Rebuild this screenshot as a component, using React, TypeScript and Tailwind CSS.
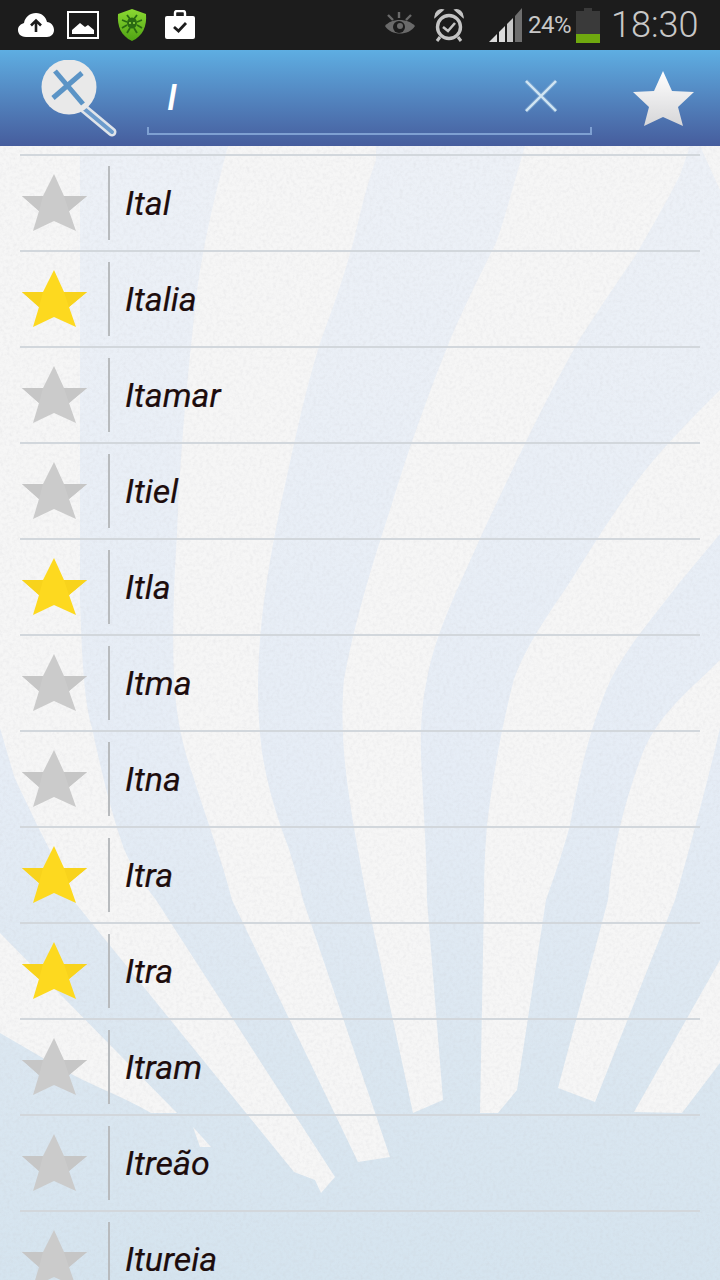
import React from "react";

const names: [string, boolean][] = [
  ["Ital", false],
  ["Italia", true],
  ["Itamar", false],
  ["Itiel", false],
  ["Itla", true],
  ["Itma", false],
  ["Itna", false],
  ["Itra", true],
  ["Itra", true],
  ["Itram", false],
  ["Itreão", false],
  ["Itureia", false],
];

const W = [
  "M0 146 L80 146 L80 600 C82 660 84 700 92 728 C102 775 112 815 124 849 C134 872 145 885 156 900 L335 1177 L321 1193 L315 1180 L294 1172 L73 900 C60 870 50 850 37 825 C28 805 20 790 14 776 L0 728 Z",
  "M0 933 L177 1113 L151 1113 C120 1095 90 1085 60 1068 L0 1033 Z",
  "M193 1127 L211 1147 L200 1147 Z",
  "M228 146 L376 146 L376 160 C365 190 360 215 353 243 C343 280 332 310 321 340 C305 390 295 440 285 485 C272 545 262 600 259 655 C257 690 258 720 262 752 C268 790 278 820 289 849 C295 870 300 885 303 900 L390 1157 L358 1162 L232 900 C222 860 205 815 193 776 C182 745 176 715 174 679 C172 630 174 580 177 534 C180 450 188 370 197 291 C203 245 215 195 228 146 Z",
  "M525 146 L690 146 L680 175 C665 205 650 230 634 258 C615 285 597 312 579 340 C545 400 512 470 482 534 C460 585 436 630 427 679 C420 710 420 745 422 776 C424 820 427 860 427 900 L443 1100 L413 1113 L367 900 C358 850 348 800 344 752 C342 725 342 700 344 679 C355 620 372 565 390 510 C408 450 428 395 450 340 C465 305 480 275 496 243 C505 218 512 190 525 146 Z",
  "M720 390 L720 534 L680 582 C655 615 628 645 611 679 C590 725 578 780 570 825 C562 855 553 880 546 900 L517 1090 L498 1113 L480 1113 L484 900 C484 870 485 850 487 825 C493 775 502 725 514 679 C526 645 550 612 570 582 C590 550 612 515 634 485 C660 450 690 420 720 390 Z",
  "M720 660 L720 728 C708 780 692 840 675 900 L595 1102 L558 1088 L608 900 C612 850 625 800 643 752 C660 712 690 690 720 660 Z",
  "M720 960 L720 1063 L682 1113 L634 1112 Z",
  "M700 146 L720 146 L720 190 Z",
];

function Backdrop() {
  return (
    <svg className="absolute left-0 top-0" width="720" height="1280" viewBox="0 0 720 1280">
      <defs>
        <linearGradient id="base" x1="0" y1="146" x2="0" y2="1280" gradientUnits="userSpaceOnUse">
          <stop offset="0" stopColor="#edf1f7" />
          <stop offset="0.55" stopColor="#e6edf6" />
          <stop offset="0.8" stopColor="#dbe7f1" />
          <stop offset="1" stopColor="#d5e4ef" />
        </linearGradient>
        <filter id="paper" x="0" y="0" width="100%" height="100%">
          <feTurbulence type="fractalNoise" baseFrequency="0.3" numOctaves="3" seed="4" />
          <feColorMatrix values="0 0 0 0 0.55  0 0 0 0 0.55  0 0 0 0 0.58  0.6 0.6 0 0 -0.5" />
        </filter>
      </defs>
      <rect width="720" height="1280" fill="url(#base)" />
      {W.map((d) => (
        <path key={d} d={d} fill="#f6f6f6" />
      ))}
      <rect width="720" height="1280" filter="url(#paper)" opacity="0.4" />
    </svg>
  );
}

function Star({ on }: { on: boolean }) {
  const main = on ? "#fdd91f" : "#cbcbcb";
  const shade = on ? "#f8d31c" : "#c6c6c6";
  return (
    <svg width="66" height="60" viewBox="0 0 66 60" className="mt-[8px] ml-[2px] block">
      <polygon points="32,0 42,22 65,22 47,37 54,57 32,47 11,57 17,37 0,22 21,22" fill={main} />
      <polygon points="65,22 47,37 42,22" fill={shade} />
      <polygon points="0,22 17,37 21,22" fill={shade} />
    </svg>
  );
}

function Row({ name, on }: { name: string; on: boolean }) {
  return (
    <div className="h-[96px] shrink-0 border-t-2 border-[#d2d7dc] pt-[10px] flex items-start">
      <div className="w-[88px] h-[74px] shrink-0">
        <Star on={on} />
      </div>
      <div className="w-[2px] h-[74px] bg-[#b8bbbe] shrink-0" />
      <div className="h-[74px] flex items-center pl-[15px] text-[34px] italic text-[#1d0c0c] font-['Roboto',sans-serif] leading-none [-webkit-text-stroke:0.2px_#1d0c0c]">
        {name}
      </div>
    </div>
  );
}

function StatusLeft() {
  return (
    <div className="flex items-center">
      <svg width="38" height="26" viewBox="0 0 38 26" className="ml-[17px]">
        <path d="M9 25 C3 25 1 21 1 18 C1 14 4 12 7 11 C8 5 13 1 19 1 C25 1 29 5 30 10 C34 10 37 14 37 18 C37 22 34 25 30 25 Z" fill="#fff" />
        <path d="M19 20 V9 M14 13.5 L19 8.5 L24 13.5" fill="none" stroke="#1c1c1c" strokeWidth="2.6" />
      </svg>
      <svg width="32" height="28" viewBox="0 0 32 28" className="ml-[12px]">
        <rect x="1" y="1" width="30" height="26" fill="none" stroke="#fff" strokeWidth="2" />
        <path d="M5 23 V19 L13 12 L18 16 L21 14 L27 19 V23 Z" fill="#fff" />
      </svg>
      <svg width="32" height="34" viewBox="0 0 32 34" className="ml-[17px]">
        <defs>
          <linearGradient id="dw" x1="0" y1="0" x2="0" y2="1">
            <stop offset="0" stopColor="#8bd832" />
            <stop offset="1" stopColor="#4fa313" />
          </linearGradient>
        </defs>
        <path d="M16 1 L30 6 C31 18 27 28 16 33 C5 28 1 18 2 6 Z" fill="url(#dw)" />
        <ellipse cx="16" cy="15" rx="5" ry="5.5" fill="#2a6a12" />
        <path d="M11 7 L14 11 M21 7 L18 11 M6 12 L11 14 M26 12 L21 14 M6 20 L11 17 M26 20 L21 17 M11 25 L14 20 M21 25 L18 20" stroke="#2a6a12" strokeWidth="1.8" fill="none" />
        <circle cx="14" cy="15" r="1" fill="#9ae044" />
        <circle cx="18" cy="15" r="1" fill="#9ae044" />
      </svg>
      <svg width="30" height="30" viewBox="0 0 30 30" className="ml-[17px]">
        <path d="M10 6 V3 C10 1.5 11 1 12 1 H18 C19 1 20 1.5 20 3 V6" fill="none" stroke="#fff" strokeWidth="2.4" />
        <rect x="0" y="6" width="30" height="23" rx="2" fill="#fff" />
        <path d="M9 17 L13.5 21 L21 13" fill="none" stroke="#1c1c1c" strokeWidth="2.8" />
      </svg>
    </div>
  );
}

function StatusRight() {
  return (
    <div className="flex items-center">
      <svg width="32" height="26" viewBox="0 0 32 26">
        <path d="M1 14 C7 6 24 6 31 14 C25 24 7 24 1 14 Z" fill="#6a6a6a" />
        <circle cx="15" cy="15" r="6" fill="#1c1c1c" />
        <circle cx="16" cy="14" r="3" fill="#6a6a6a" />
        <path d="M15 0 V6 M4 3 L9 8 M27 3 L22 8" stroke="#6a6a6a" strokeWidth="2.4" />
      </svg>
      <svg width="34" height="34" viewBox="0 0 34 34" className="ml-[16px]">
        <circle cx="17" cy="19" r="11.5" fill="none" stroke="#c4c4c4" strokeWidth="3.4" />
        <path d="M11 19 L16 23 L23 15" fill="none" stroke="#c4c4c4" strokeWidth="2.6" />
        <path d="M3 9 C3 4 7 1 11 2 Z M31 9 C31 4 27 1 23 2 Z" fill="#c4c4c4" stroke="#c4c4c4" strokeWidth="1.5" />
        <path d="M8 29 L5 33 M26 29 L29 33" stroke="#c4c4c4" strokeWidth="3" />
      </svg>
      <svg width="33" height="34" viewBox="0 0 33 34" className="ml-[23px]">
        <polygon points="0,34 8,34 8,26" fill="#dcdcdc" />
        <polygon points="10,34 16,34 16,18 10,24" fill="#dcdcdc" />
        <polygon points="18,34 24,34 24,10 18,16" fill="#c8c8c8" />
        <polygon points="26,34 33,34 33,0 26,8" fill="#6e6e6e" />
      </svg>
      <span className="ml-[6px] w-[44px] text-[24px] leading-none text-[#c8c8c8] font-['Roboto',sans-serif] tracking-[-0.5px]">24%</span>
      <div className="ml-[4px] w-[24px] h-[35px] flex flex-col items-center">
        <div className="w-[8px] h-[3px] bg-[#3a3a3a] shrink-0" />
        <div className="w-[24px] flex-1 bg-[#3a3a3a] flex flex-col justify-end">
          <div className="h-[9px] bg-[#6fa80f]" />
        </div>
      </div>
      <span className="ml-[11px] w-[89px] text-[36px] leading-none text-[#c8c8c8] font-['Roboto',sans-serif] font-light">18:30</span>
    </div>
  );
}

function Magnifier() {
  return (
    <svg width="78" height="80" viewBox="0 0 78 80" className="ml-[41px] mt-[10px] shrink-0 block">
      <path d="M41 47 L71 72" stroke="#dfe4ea" strokeWidth="9" strokeLinecap="round" />
      <path d="M41 47 L71 72" stroke="#6b9bcc" strokeWidth="4" strokeLinecap="round" />
      <circle cx="28" cy="27" r="27.5" fill="#e9e9e9" />
      <path d="M14 11 L42 44" stroke="#5b94c6" strokeWidth="5" />
      <path d="M41 13 L12 38" stroke="#5b94c6" strokeWidth="5" />
    </svg>
  );
}

export default function App() {
  return (
    <div className="relative w-[720px] h-[1280px] overflow-hidden flex flex-col bg-[#e6edf6]">
      <div className="relative h-[50px] shrink-0 bg-[#1c1c1c] flex items-center justify-between pr-[20px]">
        <StatusLeft />
        <StatusRight />
      </div>
      <div className="relative h-[96px] shrink-0 bg-gradient-to-b from-[#5eaee2] to-[#465d9d] flex items-start">
        <Magnifier />
        <div className="ml-[28px] mt-[31px] w-[445px] h-[54px] flex flex-col justify-end relative">
          <span className="absolute left-[20px] top-[-9px] text-[36px] leading-[52px] italic font-medium text-white font-['Roboto',sans-serif]">I</span>
          <svg width="36" height="36" viewBox="0 0 36 36" className="absolute right-[33px] top-[-3px]">
            <path d="M3 3 L33 33 M33 3 L3 33" stroke="#8fb5d8" strokeWidth="4" opacity="0.6" />
            <path d="M3 3 L33 33 M33 3 L3 33" stroke="#d2e6f3" strokeWidth="2.4" />
          </svg>
          <div className="h-[8px] border-b-2 border-x-2 border-[#7ea0d2]" />
        </div>
        <svg width="62" height="58" viewBox="0 0 62 58" className="ml-[41px] mt-[20px] shrink-0">
          <defs>
            <linearGradient id="hs" x1="0" y1="0" x2="0" y2="1">
              <stop offset="0" stopColor="#ffffff" />
              <stop offset="1" stopColor="#d6d6d8" />
            </linearGradient>
          </defs>
          <polygon points="30,1 39,21 61,22 45,37 50,56 30,47 11,56 16,37 0,22 21,21" fill="url(#hs)" />
        </svg>
      </div>
      <div className="relative flex-1 min-h-0 overflow-hidden">
        <div className="absolute left-0 top-[-146px]">
          <Backdrop />
        </div>
        <div className="relative mx-5 pt-[8px] flex flex-col">
          {names.map(([n, on], i) => (
            <Row key={i} name={n} on={on} />
          ))}
        </div>
      </div>
    </div>
  );
}
